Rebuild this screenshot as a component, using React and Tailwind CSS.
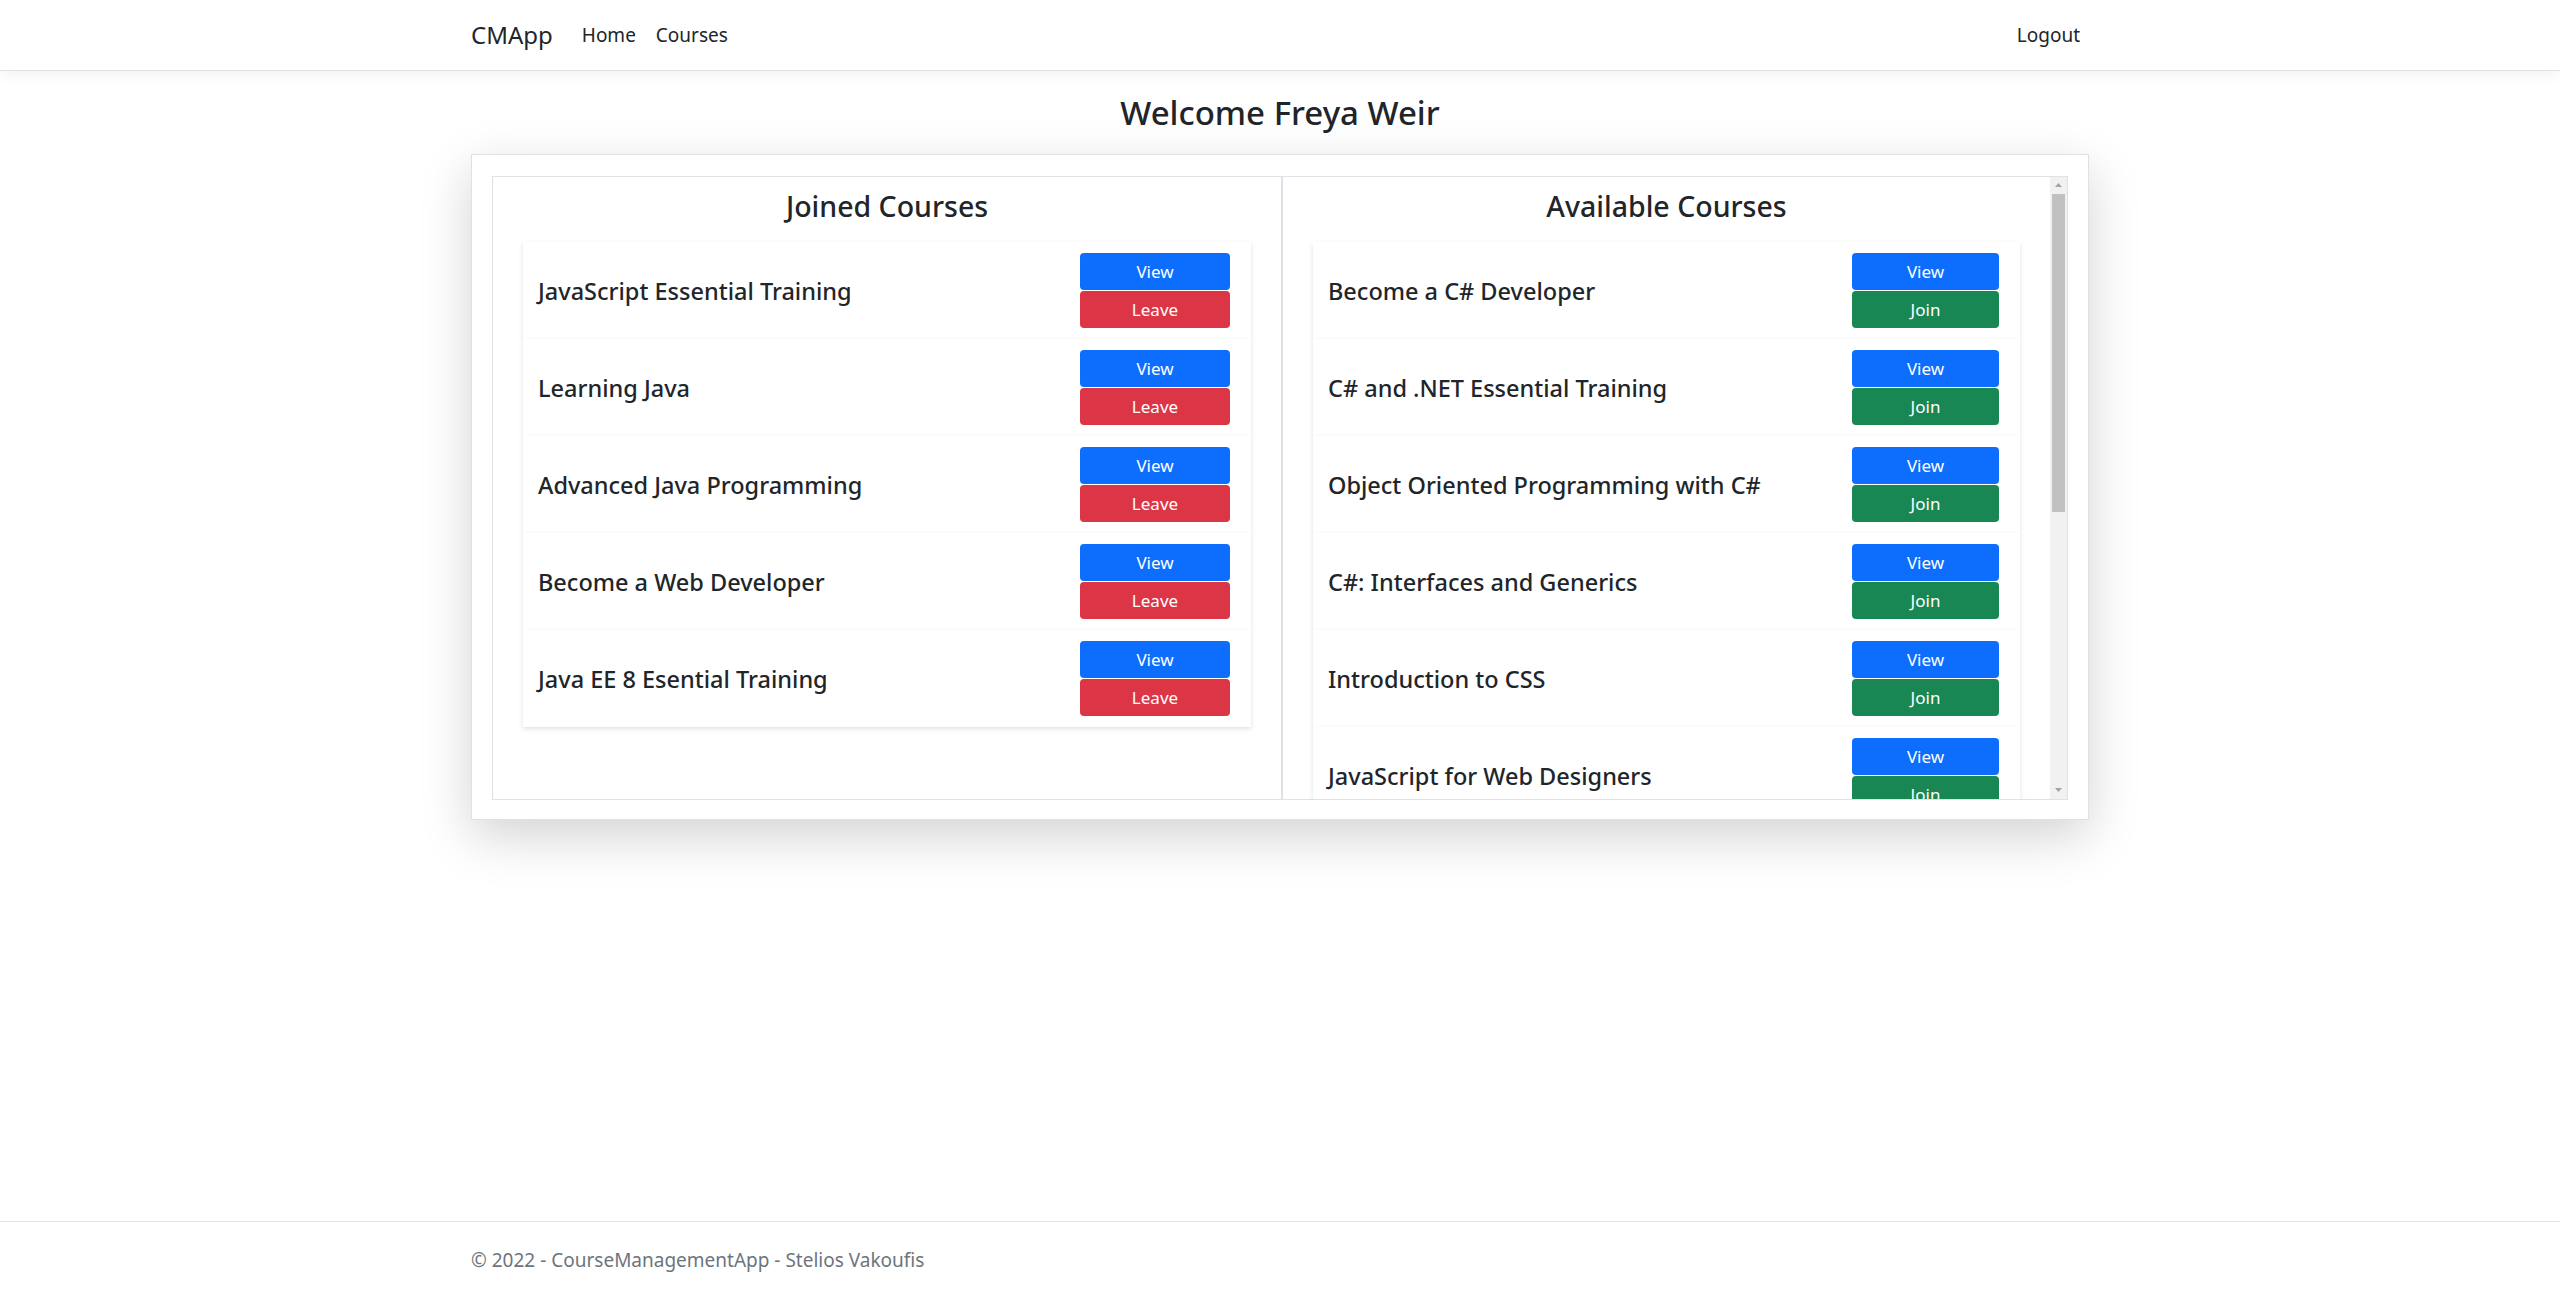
import React from "react";

const joined = [
    "JavaScript Essential Training",
    "Learning Java",
    "Advanced Java Programming",
    "Become a Web Developer",
    "Java EE 8 Esential Training",
];

const available = [
    "Become a C# Developer",
    "C# and .NET Essential Training",
    "Object Oriented Programming with C#",
    "C#: Interfaces and Generics",
    "Introduction to CSS",
    "JavaScript for Web Designers",
];

const CourseItem = ({ title, action, btnWidth }) => {
    const actionClass =
        action === "Leave" ? "bg-[#dc3545]" : "bg-[#198754]";
    return (
        <div className="flex items-center justify-between bg-white pl-[15px] pr-[21px] py-[11px] shadow-[0_2px_5px_rgba(0,0,0,0.12)]">
            <span className="pt-[2px] text-[23.5px] font-medium text-[#212529]">
                {title}
            </span>
            <div className={`flex flex-col gap-[1px] ${btnWidth}`}>
                <button className="h-[37px] rounded-[4px] bg-[#0d6efd] text-[17px] text-white">
                    View
                </button>
                <button
                    className={`h-[37px] rounded-[4px] text-[17px] text-white ${actionClass}`}
                >
                    {action}
                </button>
            </div>
        </div>
    );
};

const Arrow = ({ up }) => (
    <div className="flex h-[17px] items-center justify-center">
        <svg width="7" height="4" viewBox="0 0 7 4">
            {up ? (
                <polygon points="0,4 7,4 3.5,0" fill="#a3a3a3" />
            ) : (
                <polygon points="0,0 7,0 3.5,4" fill="#a3a3a3" />
            )}
        </svg>
    </div>
);

const App = () => {
    return (
        <div className="flex min-h-screen flex-col bg-white font-['Noto_Sans','Open_Sans',sans-serif] text-[#212529]">
            <header className="h-[71px] border-b border-[#dee2e6] bg-white shadow-[0_4px_12px_rgba(0,0,0,0.05)]">
                <div className="mx-auto flex h-full w-[1618px] items-center">
                    <span className="mr-[19px] text-[24px] text-[#212529]">
                        CMApp
                    </span>
                    <span className="px-[10px] text-[19px] text-[#212529]">
                        Home
                    </span>
                    <span className="px-[10px] text-[19px] text-[#212529]">
                        Courses
                    </span>
                    <span className="ml-auto px-[9px] text-[19px] text-[#212529]">
                        Logout
                    </span>
                </div>
            </header>

            <main className="flex-1">
                <div className="mx-auto w-[1618px]">
                    <h3 className="mb-[21px] mt-[22px] text-center text-[33px] font-medium leading-[1.2]">
                        Welcome Freya Weir
                    </h3>
                    <div className="border border-[#dee2e6] bg-white px-[20px] pb-[19px] pt-[21px] shadow-[0_16px_48px_rgba(0,0,0,0.175)]">
                        <div className="flex h-[624px] overflow-hidden border border-[#dee2e6]">
                            <div className="w-[789px] shrink-0 border-r border-[#dee2e6] px-[30px] pt-[12px]">
                                <h4 className="mb-[19px] text-center text-[28.5px] font-medium leading-[1.2]">
                                    Joined Courses
                                </h4>
                                <div className="flex flex-col">
                                    {joined.map((c) => (
                                        <CourseItem
                                            key={c}
                                            title={c}
                                            action="Leave"
                                            btnWidth="w-[150px]"
                                        />
                                    ))}
                                </div>
                            </div>
                            <div className="min-w-0 flex-1 border-l border-[#dee2e6] px-[30px] pt-[12px]">
                                <h4 className="mb-[19px] text-center text-[28.5px] font-medium leading-[1.2]">
                                    Available Courses
                                </h4>
                                <div className="flex flex-col">
                                    {available.map((c) => (
                                        <CourseItem
                                            key={c}
                                            title={c}
                                            action="Join"
                                            btnWidth="w-[147px]"
                                        />
                                    ))}
                                </div>
                            </div>
                            {/* scrollbar */}
                            <div className="flex w-[17px] shrink-0 flex-col bg-[#f1f1f1]">
                                <Arrow up />
                                <div className="mx-[2px] h-[318px] bg-[#c1c1c1]"></div>
                                <div className="flex-1"></div>
                                <Arrow />
                            </div>
                        </div>
                    </div>
                </div>
            </main>

            <footer className="h-[76px] border-t border-[#dee2e6] pt-[24px]">
                <div className="mx-auto w-[1618px] text-[19px] leading-[1.5] text-[#6c757d]">
                    © 2022 - CourseManagementApp - Stelios Vakoufis
                </div>
            </footer>
        </div>
    );
};

export default App;
